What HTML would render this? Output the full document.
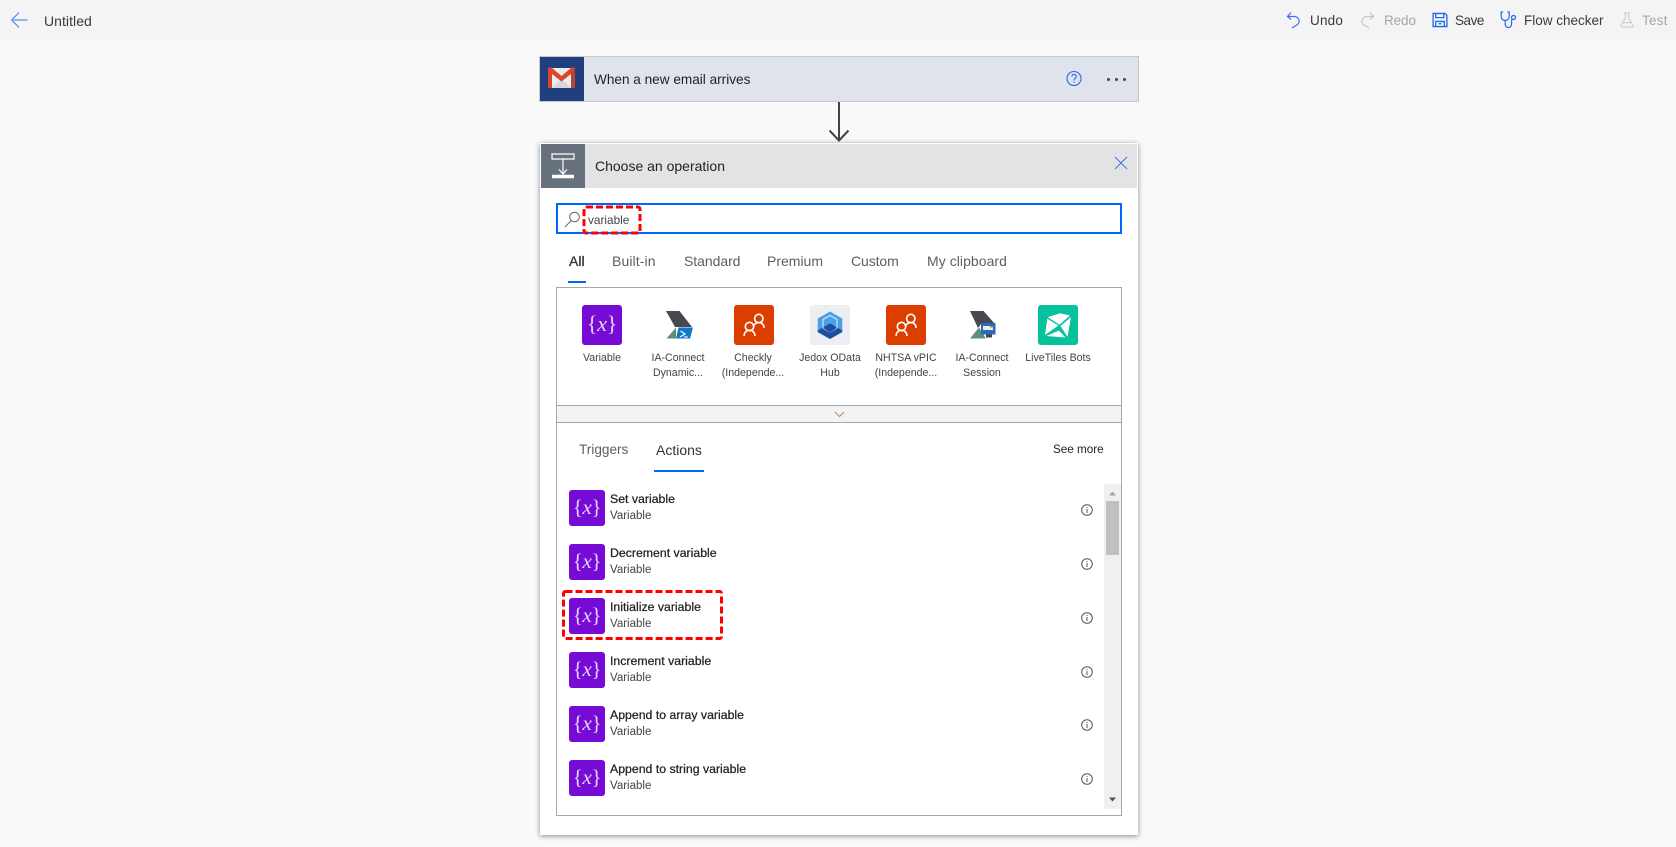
<!DOCTYPE html>
<html lang="en"><head><meta charset="utf-8"><title>Untitled</title>
<style>
html,body{margin:0;padding:0}
body{width:1676px;height:847px;position:relative;overflow:hidden;background:#f9f9f9;font-family:"Liberation Sans",sans-serif;color:#333}
div,span,svg{position:absolute;box-sizing:border-box}
.t{white-space:nowrap;line-height:18px;height:18px}
.tb{font-size:13.5px;top:12px;color:#3a3a3a}
.dis{color:#a6a6a6}
.tab{font-size:14px;top:252px;color:#605e5c}
.tile{left:0;top:0;width:40px;height:40px;border-radius:3px}
.ct{width:40px;height:40px;top:305px}
.lb{width:90px;text-align:center;font-size:10.6px;line-height:15px;color:#444;top:351px;white-space:nowrap}
.x{background:#770bd6;border-radius:3px;color:#e6d6f7;font-family:"Liberation Serif",serif;text-align:center;white-space:nowrap}
.x i{font-style:italic}
.big{left:582px;top:305px;width:40px;height:40px;font-size:22px;line-height:38px;letter-spacing:-.2px}
.it{left:569px;width:36px;height:36px;font-size:21px;line-height:34px;letter-spacing:-.3px}
.n{left:610px;font-size:12.3px;color:#222;-webkit-text-stroke:.25px #222;line-height:16px;height:16px;white-space:nowrap}
.s{left:610px;font-size:11.5px;color:#444;line-height:16px;height:16px;white-space:nowrap}
.inf{left:1081px;width:12px;height:12px}
</style></head><body>

<div style="left:0;top:0;width:1676px;height:40px;background:#f4f4f4"></div>
<svg style="left:10px;top:11px" width="20" height="18" viewBox="0 0 20 18" fill="none" stroke="#4b84f5" stroke-width="1.2"><path d="M9 1.500 1.600 9l7.400 7.500"/><path d="M2 9h15.500" stroke="#6fa8f7" stroke-width="1.600"/></svg>
<span class="t" style="left:44px;top:12px;font-size:14px;letter-spacing:.05px;color:#3a3a3a">Untitled</span>

<svg style="left:1286px;top:11px" width="15" height="18" viewBox="0 0 15 18" fill="none" stroke="#3f6ff0" stroke-width="1.2"><path d="M1.500 5.500h7a4.600 4.600 0 0 1 1.600 8.900L6 17"/><path d="M5 1.500 1.500 5.500 5 8.500"/></svg>
<span class="t tb" style="left:1310px;letter-spacing:.2px">Undo</span>
<svg style="left:1360px;top:11px" width="15" height="18" viewBox="0 0 15 18" fill="none" stroke="#c6c6c6" stroke-width="1.2"><path d="M13.500 5.500h-7a4.600 4.600 0 0 0-1.600 8.900L9 17"/><path d="M10 1.500l3.500 4L10 8.500"/></svg>
<span class="t tb dis" style="left:1384px;letter-spacing:-.1px">Redo</span>
<svg style="left:1432px;top:12px" width="16" height="16" viewBox="0 0 17 16" fill="none" stroke="#1f66f0" stroke-width="1.4"><path d="M1.200 1h12.600l2 2v12H1.200z"/><path d="M4 1v4.500h8.500V1"/><path d="M4 15V9.500h9V15"/><path d="M7 12h3"/></svg>
<span class="t tb" style="left:1455px;letter-spacing:-.45px">Save</span>
<svg style="left:1500px;top:11px" width="18" height="18" viewBox="0 0 18 18" fill="none" stroke="#2a66f0" stroke-width="1.2"><path d="M3 1H1.200v4.500a4 4 0 0 0 8 0V1H7.400"/><path d="M5.200 9.500v3.800a3.200 3.200 0 0 0 6.400 0V8.600"/><circle cx="13.500" cy="6.500" r="2"/></svg>
<span class="t tb" style="left:1524px">Flow checker</span>
<svg style="left:1620px;top:11px" width="14" height="18" viewBox="0 0 16 18" fill="none" stroke="#c9c9c9" stroke-width="1.2"><path d="M4.500 1h7M6 1v6L1.200 15.500q-.5 1.500 1 1.500h11.600q1.500 0 1-1.500L10 7V1"/><path d="M3.500 12h9"/></svg>
<span class="t tb dis" style="left:1642px;letter-spacing:.2px">Test</span>

<!-- trigger card -->
<div style="left:539px;top:56px;width:600px;height:46px;background:#dfe3ec;border:1px solid #c8c8c8"></div>
<div style="left:540px;top:57px;width:44px;height:44px;background:#1f3f7f"></div>
<svg style="left:547px;top:66px" width="29" height="24" viewBox="0 0 29 24"><path d="M1 2h27v20H1z" fill="#ececec"/><path d="M5 22 14.500 13 24 22z" fill="#d8d8d8"/><path d="M1 1.500h3.500L14.500 10 24.500 1.500H28V22h-4V8L14.500 15.500 5 8V22H1z" fill="#d9472f"/><path d="M24 7v15h4V2z" fill="#b6452b"/></svg>
<span class="t" style="left:594px;top:70.500px;font-size:13.600px;color:#222">When a new email arrives</span>
<svg style="left:1066px;top:70px" width="16" height="17" viewBox="0 0 16 17" fill="none" stroke="#2a66f0" stroke-width="1.1"><circle cx="8" cy="8.500" r="7"/><path d="M5.800 6.500a2.200 2.200 0 1 1 3.400 1.900c-.8.500-1.200 1-1.200 2"/><path d="M8 11.600v1.300"/></svg>
<div style="left:1107px;top:78px;width:3px;height:3px;background:#444;border-radius:50%"></div>
<div style="left:1115px;top:78px;width:3px;height:3px;background:#444;border-radius:50%"></div>
<div style="left:1123px;top:78px;width:3px;height:3px;background:#444;border-radius:50%"></div>

<!-- arrow -->
<svg style="left:827px;top:102px" width="24" height="41" viewBox="0 0 24 41" fill="none" stroke="#444" stroke-width="2"><path d="M12 0v38"/><path d="M2.500 28.500 12 38.500l9.500-10"/></svg>

<!-- panel -->
<div style="left:540px;top:143px;width:598px;height:692px;background:#fff;box-shadow:0 1px 5px rgba(0,0,0,.45)"></div>
<div style="left:541px;top:144px;width:596px;height:44px;background:#e3e3e3"></div>
<div style="left:541px;top:144px;width:44px;height:44px;background:#68727e"></div>
<svg style="left:551px;top:153px" width="24" height="26" viewBox="0 0 24 26" fill="none" stroke="#fff" stroke-width="1.200"><path d="M1 1h22v5H1z"/><path d="M12 6v15"/><path d="M8 16.500l4 4.500 4-4.500"/><path d="M1 23.500h22" stroke-width="3.500"/></svg>
<span class="t" style="left:595px;top:157px;font-size:14px;color:#222">Choose an operation</span>
<svg style="left:1114px;top:156px" width="14" height="14" viewBox="0 0 14 14" fill="none" stroke="#3d72ef" stroke-width="1"><path d="M1 1l12 12M13 1 1 13"/></svg>

<!-- search -->
<div style="left:556px;top:203px;width:566px;height:31px;background:#fff;border:2px solid #0066ff"></div>
<svg style="left:564px;top:211px" width="17" height="17" viewBox="0 0 17 17" fill="none" stroke="#666" stroke-width="1"><circle cx="10.500" cy="6" r="4.800"/><path d="M7 9.800 1 16"/></svg>
<span class="t" style="left:588px;top:211px;font-size:11.800px;color:#444">variable</span>
<svg style="left:579.500px;top:203px" width="64" height="34" viewBox="0 0 64 34" fill="none"><rect x="4" y="4" width="56" height="26" rx="2" stroke="#f00" stroke-width="3" stroke-dasharray="7 3"/></svg>

<!-- tabs -->
<span class="t tab" style="left:569px;color:#333;-webkit-text-stroke:.3px #333">All</span>
<span class="t tab" style="left:612px;letter-spacing:.1px">Built-in</span>
<span class="t tab" style="left:684px;letter-spacing:-.05px">Standard</span>
<span class="t tab" style="left:767px">Premium</span>
<span class="t tab" style="left:851px;letter-spacing:-.1px">Custom</span>
<span class="t tab" style="left:927px;letter-spacing:.05px">My clipboard</span>
<div style="left:568px;top:281px;width:18px;height:2px;background:#0066ff"></div>

<!-- connector box -->
<div style="left:556px;top:287px;width:566px;height:529px;border:1px solid #a8a8a8"></div>
<div style="left:556px;top:405px;width:566px;height:18px;background:#f3f3f3;border:1px solid #a8a8a8"></div>
<svg style="left:834px;top:411px" width="11" height="7" viewBox="0 0 11 7" fill="none" stroke="#b08a6a" stroke-width="1"><path d="M1 1l4.500 4.500L10 1"/></svg>

<div class="x big">{<i>x</i>}</div>
<div class="lb" style="left:557px">Variable</div>

<svg style="left:660px;top:305px" width="40" height="40" viewBox="660 305 40 40"><path d="M666 311h13.500l12.500 16h-17z" fill="#464a4f"/><path d="M676 327.500 666.500 338.500H676z" fill="#5f8f78"/><path d="M678.500 327.500h14.500l-3 11h-14z" fill="#0f78c8"/><path d="M680.500 331l4.500 3-5 3" fill="none" stroke="#fff" stroke-width="1.200"/><path d="M684 337h4" stroke="#fff" stroke-width="1"/></svg>
<div class="lb" style="left:633px">IA-Connect<br>Dynamic...</div>

<div class="ct" style="left:734px"><div class="tile" style="background:#dc3e00"></div>
<svg class="tile" viewBox="0 0 40 40" fill="none" stroke="#fff" stroke-width="1.600"><circle cx="15.500" cy="21.500" r="4.200"/><path d="M10 31c.3-3.800 2.500-5.700 5.500-5.700s5.200 1.900 5.500 5.700"/><circle cx="24.800" cy="13.500" r="4.200"/><path d="M19.500 21.500c.8-2.600 2.800-3.900 5.300-3.900 3 0 5 1.900 5.400 5.300"/></svg></div>
<div class="lb" style="left:708px">Checkly<br>(Independe...</div>

<div class="ct" style="left:810px"><div class="tile" style="background:#eceef1"></div>
<svg class="tile" viewBox="0 0 40 40"><path d="M20 6.500 32.300 13.500V27L20 34 7.700 27V13.500z" fill="#4c9fe4"/><path d="M20 18.500 32.300 25.500V27L20 34 7.700 27V25.500z" fill="#1c4f9f"/><path d="M20 10.500 27 14.500V23L20 27 13 23V14.500z" fill="none" stroke="#cbe5fa" stroke-width="1.200"/><path d="M20 18.500 27 23 20 27.500 13 23z" fill="#1c4f9f"/></svg></div>
<div class="lb" style="left:785px">Jedox OData<br>Hub</div>

<div class="ct" style="left:886px"><div class="tile" style="background:#dc3e00"></div>
<svg class="tile" viewBox="0 0 40 40" fill="none" stroke="#fff" stroke-width="1.600"><circle cx="15.500" cy="21.500" r="4.200"/><path d="M10 31c.3-3.800 2.500-5.700 5.500-5.700s5.200 1.900 5.500 5.700"/><circle cx="24.800" cy="13.500" r="4.200"/><path d="M19.500 21.500c.8-2.600 2.800-3.900 5.300-3.900 3 0 5 1.900 5.400 5.300"/></svg></div>
<div class="lb" style="left:861px">NHTSA vPIC<br>(Independe...</div>

<svg style="left:962px;top:305px" width="40" height="40" viewBox="962 305 40 40"><path d="M970 311h13.500l11.500 13h-14l-3 4z" fill="#464a4f"/><path d="M979 327.500 970 338.500h16z" fill="#5f8f78"/><path d="M981 323h14.500v11.500H981z" fill="#2a6cb8"/><path d="M983 326h10v4h-10z" fill="#e8eef5"/><path d="M990 326h3v1.500h-3z" fill="#e0702a"/><path d="M986 334.500h6v3h-6z" fill="#444"/></svg>
<div class="lb" style="left:937px">IA-Connect<br>Session</div>

<div class="ct" style="left:1038px"><div class="tile" style="background:#05c19c"></div>
<svg class="tile" viewBox="0 0 40 40" fill="#fff"><path d="M9.800 12.300 22 8.300 32 10.500 21.500 19.700z"/><path d="M9.300 13.800 20.300 20.500 7 30z"/><path d="M33 12 29.500 31.700 22.500 21z"/><path d="M8.500 31 21 25.500 27.500 32.500z"/></svg></div>
<div class="lb" style="left:1013px">LiveTiles Bots</div>

<!-- sub tabs -->
<span class="t" style="left:579px;top:441px;font-size:13.600px;color:#605e5c">Triggers</span>
<span class="t" style="left:656px;top:441px;font-size:14px;color:#333">Actions</span>
<div style="left:654px;top:470px;width:50px;height:2px;background:#0066ff"></div>
<span class="t" style="left:1053px;top:441px;font-size:11.700px;color:#222">See more</span>

<!-- actions -->
<div class="x it" style="top:490px">{<i>x</i>}</div><span class="n" style="top:491px">Set variable</span><span class="s" style="top:507.500px">Variable</span>
<div class="x it" style="top:544px">{<i>x</i>}</div><span class="n" style="top:545px">Decrement variable</span><span class="s" style="top:561.500px">Variable</span>
<div class="x it" style="top:598px">{<i>x</i>}</div><span class="n" style="top:599px">Initialize variable</span><span class="s" style="top:615.500px">Variable</span>
<div class="x it" style="top:652px">{<i>x</i>}</div><span class="n" style="top:653px">Increment variable</span><span class="s" style="top:669.500px">Variable</span>
<div class="x it" style="top:706px">{<i>x</i>}</div><span class="n" style="top:707px">Append to array variable</span><span class="s" style="top:723.500px">Variable</span>
<div class="x it" style="top:760px">{<i>x</i>}</div><span class="n" style="top:761px">Append to string variable</span><span class="s" style="top:777.500px">Variable</span>
<svg style="left:559px;top:587px" width="167" height="56" viewBox="0 0 167 56" fill="none"><rect x="4.500" y="4.500" width="158" height="47" rx="2" stroke="#f00" stroke-width="3" stroke-dasharray="7 3"/></svg>

<svg class="inf" style="top:504px" viewBox="0 0 12 12" fill="none" stroke="#555" stroke-width="1"><circle cx="6" cy="6" r="5.300"/><path d="M6 5v4M6 3v1"/></svg>
<svg class="inf" style="top:558px" viewBox="0 0 12 12" fill="none" stroke="#555" stroke-width="1"><circle cx="6" cy="6" r="5.300"/><path d="M6 5v4M6 3v1"/></svg>
<svg class="inf" style="top:612px" viewBox="0 0 12 12" fill="none" stroke="#555" stroke-width="1"><circle cx="6" cy="6" r="5.300"/><path d="M6 5v4M6 3v1"/></svg>
<svg class="inf" style="top:666px" viewBox="0 0 12 12" fill="none" stroke="#555" stroke-width="1"><circle cx="6" cy="6" r="5.300"/><path d="M6 5v4M6 3v1"/></svg>
<svg class="inf" style="top:719px" viewBox="0 0 12 12" fill="none" stroke="#555" stroke-width="1"><circle cx="6" cy="6" r="5.300"/><path d="M6 5v4M6 3v1"/></svg>
<svg class="inf" style="top:773px" viewBox="0 0 12 12" fill="none" stroke="#555" stroke-width="1"><circle cx="6" cy="6" r="5.300"/><path d="M6 5v4M6 3v1"/></svg>

<!-- scrollbar -->
<div style="left:1104px;top:484px;width:17px;height:325px;background:#f0f0f0"></div>
<svg style="left:1108px;top:491px" width="9" height="6" viewBox="0 0 9 6"><path d="M4.500 0.500 8 4.500H1z" fill="#a3a3a3"/></svg>
<div style="left:1106px;top:501px;width:13px;height:54px;background:#c1c1c1"></div>
<svg style="left:1108px;top:797px" width="9" height="6" viewBox="0 0 9 6"><path d="M1 0.500h7L4.500 4.500z" fill="#505050"/></svg>

</body></html>
